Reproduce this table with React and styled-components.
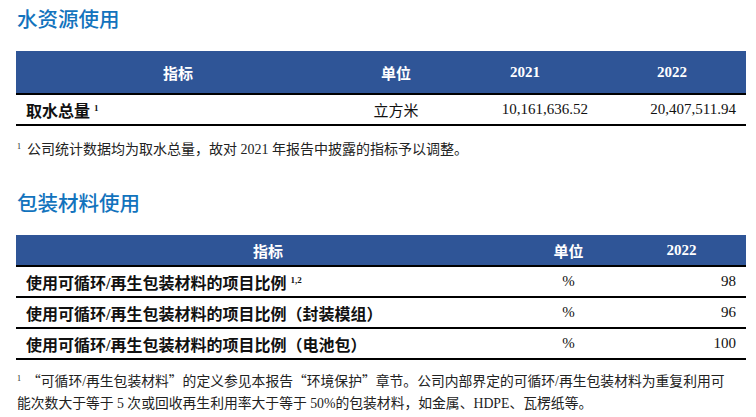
import React from "react";
import styled, { createGlobalStyle } from "styled-components";

const Global = createGlobalStyle`
  html, body { margin: 0; padding: 0; background: #fff; }
  body { font-family: "Liberation Serif", "Noto Sans CJK SC", serif; color: #111; }
`;

const Page = styled.div`
  width: 756px;
  padding-left: 16px;
  box-sizing: border-box;
`;

const Title = styled.h2`
  margin: ${(p) => p.$mt}px 0 21px 1px;
  font-family: "Noto Sans CJK SC", sans-serif;
  font-size: 20.5px;
  line-height: 24px;
  font-weight: 500;
  color: #1273bd;
`;

const Table = styled.table`
  width: 730px;
  border-collapse: collapse;
  table-layout: fixed;
`;

const HeadCell = styled.th`
  height: ${(p) => p.$h}px;
  padding: 0;
  background: #2f5597;
  color: #fff;
  font-family: "Liberation Serif", "Noto Sans CJK SC", serif;
  font-weight: 700;
  font-size: 15px;
  text-align: center;
  border-bottom: 2px solid #000;
`;

const Cell = styled.td`
  height: 29px;
  padding: 0 ${(p) => (p.$align === "right" ? 10 : 0)}px 0 ${(p) => (p.$align === "left" ? 10 : 0)}px;
  text-align: ${(p) => p.$align || "center"};
  font-size: ${(p) => (p.$bold ? 16 : 15)}px;
  font-weight: ${(p) => (p.$bold ? 700 : 400)};
  border-bottom: 2px solid #000;
  white-space: nowrap;
`;

const Sup = styled.sup`
  font-size: 9px;
  font-family: "Liberation Serif", serif;
  vertical-align: 6px;
  line-height: 0;
  margin-left: 4px;
`;

const Note = styled.p`
  margin: ${(p) => p.$mt}px 0 0 1px;
  font-size: ${(p) => p.$fs}px;
  line-height: ${(p) => p.$lh}px;
  color: #222;
  white-space: nowrap;
`;

const NoteSup = styled.sup`
  font-size: 8px;
  vertical-align: 5px;
  line-height: 0;
  margin-right: 6px;
`;

const Quote = styled.span`
  font-family: "Noto Sans CJK SC", sans-serif;
`;

const waterCols = [324, 112, 146, 148];
const packCols = [504, 97, 129];

const packRows = [
  { label: "使用可循环/再生包装材料的项目比例", sup: "1,2", value: "98" },
  { label: "使用可循环/再生包装材料的项目比例（封装模组）", value: "96" },
  { label: "使用可循环/再生包装材料的项目比例（电池包）", value: "100" },
];

export default function App() {
  return (
    <Page>
      <Global />
      <Title $mt={6}>水资源使用</Title>
      <Table>
        <colgroup>
          {waterCols.map((w, i) => (
            <col key={i} style={{ width: w }} />
          ))}
        </colgroup>
        <thead>
          <tr>
            <HeadCell $h={42}>指标</HeadCell>
            <HeadCell $h={42}>单位</HeadCell>
            <HeadCell $h={42}>2021</HeadCell>
            <HeadCell $h={42}>2022</HeadCell>
          </tr>
        </thead>
        <tbody>
          <tr>
            <Cell $align="left" $bold>
              取水总量<Sup>1</Sup>
            </Cell>
            <Cell>立方米</Cell>
            <Cell $align="right">10,161,636.52</Cell>
            <Cell $align="right">20,407,511.94</Cell>
          </tr>
        </tbody>
      </Table>
      <Note $mt={14} $lh={20} $fs={14}>
        <NoteSup>1</NoteSup>公司统计数据均为取水总量，故对 2021 年报告中披露的指标予以调整。
      </Note>
      <Title $mt={30}>包装材料使用</Title>
      <Table>
        <colgroup>
          {packCols.map((w, i) => (
            <col key={i} style={{ width: w }} />
          ))}
        </colgroup>
        <thead>
          <tr>
            <HeadCell $h={30}>指标</HeadCell>
            <HeadCell $h={30}>单位</HeadCell>
            <HeadCell $h={30}>2022</HeadCell>
          </tr>
        </thead>
        <tbody>
          {packRows.map((r) => (
            <tr key={r.label}>
              <Cell $align="left" $bold>
                {r.label}
                {r.sup && <Sup>{r.sup}</Sup>}
              </Cell>
              <Cell>%</Cell>
              <Cell $align="right">{r.value}</Cell>
            </tr>
          ))}
        </tbody>
      </Table>
      <Note $mt={9} $lh={22} $fs={13.8}>
        <NoteSup>1</NoteSup>
        <Quote>“</Quote>可循环/再生包装材料<Quote>”</Quote>的定义参见本报告<Quote>“</Quote>环境保护<Quote>”</Quote>章节。公司内部界定的可循环/再生包装材料为重复利用可
        <br />
        能次数大于等于 5 次或回收再生利用率大于等于 50%的包装材料，如金属、HDPE、瓦楞纸等。
      </Note>
    </Page>
  );
}
